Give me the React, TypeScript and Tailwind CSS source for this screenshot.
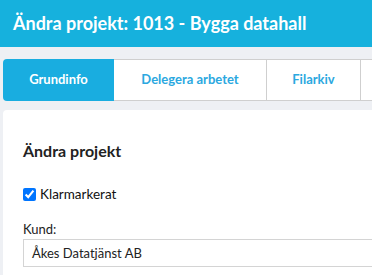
export default function App() {
  return (
    <div className="min-h-screen bg-[#eef0f4] font-['Lato',sans-serif] overflow-hidden">
      <div className="h-[47px] bg-[#16b1dd] pl-[13px] flex items-center">
        <h1 className="text-[18px] font-bold text-white whitespace-nowrap">
          Ändra projekt: 1013 - Bygga datahall
        </h1>
      </div>

      <div className="pl-[3px] pt-[12px] flex whitespace-nowrap">
        {tabs.map((tab, i) => (
          <div
            key={tab || i}
            className={
              i === 0
                ? 'h-[42px] w-[111px] shrink-0 flex items-center justify-center rounded-l-[4px] bg-[#19ade0] text-white text-[13px] font-bold'
                : 'h-[42px] shrink-0 flex items-center justify-center bg-white border-y border-r border-[#cfcfcf] text-[#2ba8e0] text-[13px] font-bold ' +
                  widths[i]
            }
          >
            {tab}
          </div>
        ))}
      </div>

      <div className="ml-[3px] mt-[9px] bg-white rounded-tl-[4px] pl-[20px] pt-[31px] pb-[10px]">
        <h2 className="text-[16px] font-bold text-[#222] leading-[20px]">Ändra projekt</h2>
        <label className="mt-[23px] flex items-center gap-[4px] text-[13.5px] text-[#111]">
          <input type="checkbox" defaultChecked className="w-[13px] h-[13px] m-0" />
          Klarmarkerat
        </label>
        <div className="mt-[17px] text-[13px] text-[#222] leading-[16px]">Kund:</div>
        <div className="mt-[2px] h-[28px] border border-[#d4d4d4] border-r-0 flex items-center pl-[8px] text-[13px] text-[#222]">
          Åkes Datatjänst AB
        </div>
      </div>
    </div>
  )
}

// last tab is only partly on screen, its label falls outside the window
const tabs = ['Grundinfo', 'Delegera arbetet', 'Filarkiv', '']
const widths = ['', 'w-[153px]', 'w-[94px]', 'w-[120px]']
